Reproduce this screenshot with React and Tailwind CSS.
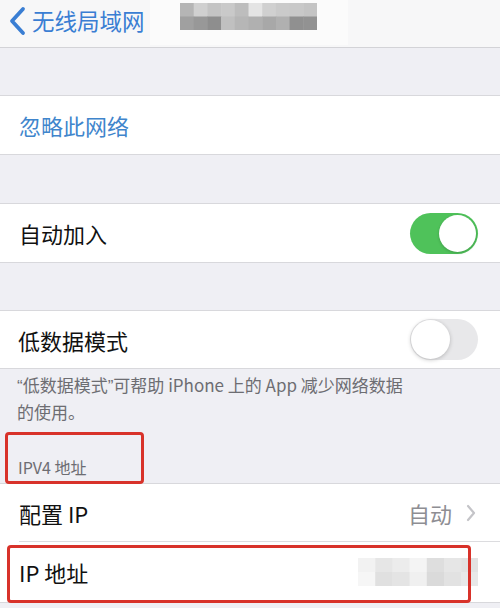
import React from "react";

const font = { fontFamily: '"Noto Sans CJK SC", "Noto Sans", sans-serif' };

function Pixels({ rows, cw, ch }) {
  const w = rows[0].length * cw;
  const h = rows.length * ch;
  return (
    <svg width={w} height={h} viewBox={`0 0 ${w} ${h}`} className="block">
      {rows.map((r, i) =>
        r.map((c, j) => (
          <rect key={`${i}-${j}`} x={j * cw} y={i * ch} width={cw + 0.5} height={ch + 0.5} fill={c} />
        ))
      )}
    </svg>
  );
}

function Toggle({ on }) {
  return on ? (
    <div className="w-[68px] h-[41px] rounded-full bg-[#4fc25a] relative">
      <div className="absolute right-[2px] top-[2px] w-[37px] h-[37px] rounded-full bg-white shadow-[0_1px_3px_rgba(0,0,0,0.2)]" />
    </div>
  ) : (
    <div className="w-[68px] h-[41px] rounded-full bg-[#e8e8ea] relative">
      <div className="absolute left-[1px] top-[1px] w-[39px] h-[39px] rounded-full bg-white shadow-[0_1px_4px_rgba(0,0,0,0.22)]" />
    </div>
  );
}

export default function App() {
  const title = [
    ["#b5b5b5", "#d0d0d0", "#c4c4c4", "#c9c9c9", "#bdbdbd", "#e4e4e4", "#d0d0d0", "#cacaca", "#c8c8c8", "#c4c4c4"],
    ["#a0a0a0", "#989898", "#8e8e8e", "#c0c0c0", "#b6b6b6", "#b0b0b0", "#a8a8a8", "#b0b0b0", "#909090", "#929292"],
  ];
  const ip = [
    ["#f2f2f2", "#e6e6e6", "#ececec", "#f4f4f4", "#dedede", "#e6e6e6", "#e2e2e2"],
    ["#f6f6f6", "#e0e0e0", "#e4e4e4", "#f0f0f0", "#dadada", "#e2e2e2", "#e8e8e8"],
  ];
  return (
    <div className="w-[500px] h-[608px] overflow-hidden bg-[#efeff4] relative" style={font}>
      {/* nav */}
      <div className="h-[48px] bg-[#f7f7f8] border-b border-[#d3d3d7] flex items-center relative">
        <svg width="20" height="30" viewBox="0 0 20 30" className="ml-[7px] mt-[-6px]">
          <path d="M16 3 L5 15 L16 27" fill="none" stroke="#3a7ed3" strokeWidth="3.8" strokeLinecap="round" strokeLinejoin="round" />
        </svg>
        <span className="ml-[5px] mt-[-6px] text-[22.5px] leading-none text-[#3a7ed3]">无线局域网</span>
        <div className="absolute left-[150px] top-0 w-[198px] h-[45px] bg-[#fbfbfb]" />
        <div className="absolute left-[180px] top-[3px]">
          <Pixels rows={title} cw={13.7} ch={13.5} />
        </div>
      </div>
      <div className="h-[47px]" />
      <div className="h-[60px] bg-white border-y border-[#d8d8dc] flex items-center pl-[19px]">
        <span className="text-[22px] text-[#4085cc] leading-none">忽略此网络</span>
      </div>
      <div className="h-[48px]" />
      <div className="h-[60px] bg-white border-y border-[#d8d8dc] flex items-center justify-between pl-[19px] pr-[22px]">
        <span className="text-[22px] text-[#111] leading-none">自动加入</span>
        <Toggle on />
      </div>
      <div className="h-[47px]" />
      <div className="h-[59px] bg-white border-y border-[#d8d8dc] flex items-center justify-between pl-[18px] pr-[22px]">
        <span className="text-[22px] text-[#111] leading-none">低数据模式</span>
        <Toggle on={false} />
      </div>
      <div className="h-[60px] pl-[17px] pt-[3px] text-[17px] leading-[25px] text-[#6d6d72] whitespace-nowrap">
        <span style={{ fontFamily: '"Liberation Sans", sans-serif' }}>“</span>低数据模式<span style={{ fontFamily: '"Liberation Sans", sans-serif' }}>”</span>可帮助 iPhone 上的 App 减少网络数据
        <br />
        的使用。
      </div>
      <div className="h-[54px] flex items-end pl-[18px] pb-[8px]">
        <span className="text-[16px] leading-none text-[#6d6d72]">IPV4 地址</span>
      </div>
      <div className="bg-white border-y border-[#d8d8dc]">
        <div className="h-[57px] flex items-center justify-between pl-[19px] pr-[24px]">
          <span className="text-[22px] text-[#111] leading-none">配置 IP</span>
          <div className="flex items-center gap-[14px]">
            <span className="text-[22px] text-[#8e8e93] leading-none">自动</span>
            <svg width="10" height="18" viewBox="0 0 10 18">
              <path d="M2 2 L8 9 L2 16" fill="none" stroke="#c4c4c8" strokeWidth="2.2" strokeLinecap="round" strokeLinejoin="round" />
            </svg>
          </div>
        </div>
        <div className="ml-[19px] border-t border-[#dcdcdf]" />
        <div className="h-[60px] flex items-center justify-between pl-[19px] pr-[22px]">
          <span className="text-[22px] text-[#111] leading-none">IP 地址</span>
          <Pixels rows={ip} cw={17.2} ch={14} />
        </div>
      </div>
      {/* red annotation boxes */}
      <div className="absolute left-[5px] top-[432px] w-[139px] h-[52px] border-[3px] border-[#d8322a] rounded-[4px]" />
      <div className="absolute left-[7px] top-[545px] w-[464px] h-[58px] border-[3px] border-[#d8322a] rounded-[4px]" />
    </div>
  );
}
